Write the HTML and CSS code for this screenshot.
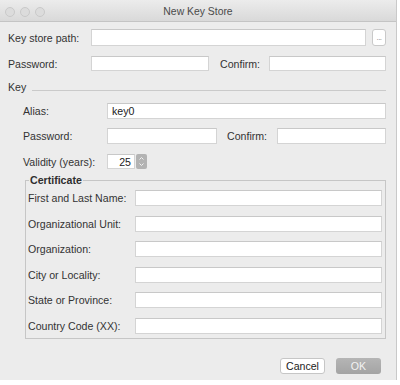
FILE: index.html
```html
<!DOCTYPE html>
<html lang="en">
<head>
    <meta charset="UTF-8">
    <title>New Key Store</title>
    <link rel="stylesheet" href="styles.css">
</head>

<body>
    <div class="window">
        <!-- title bar -->
        <div class="titlebar">
            <div class="lights"><span></span><span></span><span></span></div>
            <div class="title">New Key Store</div>
        </div>

        <div class="content">
            <!-- key store -->
            <div class="row row-path">
                <div class="lbl lbl-main">Key store path:</div>
                <div class="field grow"></div>
                <div class="dots">...</div>
            </div>
            <div class="row row-pass">
                <div class="lbl lbl-main">Password:</div>
                <div class="field store-pass"></div>
                <div class="lbl lbl-confirm">Confirm:</div>
                <div class="field grow"></div>
            </div>

            <!-- key -->
            <div class="section">
                <span>Key</span>
                <span class="rule"></span>
            </div>
            <div class="key">
                <div class="row row-key">
                    <div class="lbl lbl-key">Alias:</div>
                    <div class="field grow">key0</div>
                </div>
                <div class="row row-key">
                    <div class="lbl lbl-key">Password:</div>
                    <div class="field key-pass"></div>
                    <div class="lbl lbl-confirm2">Confirm:</div>
                    <div class="field grow"></div>
                </div>
                <div class="row row-valid">
                    <div class="lbl lbl-key">Validity (years):</div>
                    <div class="field years">25</div>
                    <div class="stepper">
                        <svg viewBox="0 0 11 15" width="11" height="15">
                            <rect x="0" y="0" width="11" height="15" rx="2" fill="#b3b3b3"/>
                            <path d="M3.5 5.5 L5.5 3.5 L7.5 5.5" fill="none" stroke="#f2f2f2" stroke-width="1"/>
                            <path d="M3.5 9.5 L5.5 11.5 L7.5 9.5" fill="none" stroke="#f2f2f2" stroke-width="1"/>
                        </svg>
                    </div>
                </div>

                <!-- certificate box -->
                <div class="group">
                    <div class="group-title">Certificate</div>
                    <div class="row row-cert">
                        <div class="lbl lbl-cert">First and Last Name:</div>
                        <div class="field grow"></div>
                    </div>
                    <div class="row row-cert">
                        <div class="lbl lbl-cert">Organizational Unit:</div>
                        <div class="field grow"></div>
                    </div>
                    <div class="row row-cert">
                        <div class="lbl lbl-cert">Organization:</div>
                        <div class="field grow"></div>
                    </div>
                    <div class="row row-cert">
                        <div class="lbl lbl-cert">City or Locality:</div>
                        <div class="field grow"></div>
                    </div>
                    <div class="row row-cert">
                        <div class="lbl lbl-cert">State or Province:</div>
                        <div class="field grow"></div>
                    </div>
                    <div class="row row-cert">
                        <div class="lbl lbl-cert">Country Code (XX):</div>
                        <div class="field grow"></div>
                    </div>
                </div>
            </div>

            <!-- buttons -->
            <div class="actions">
                <div class="btn btn-cancel">Cancel</div>
                <div class="btn btn-ok">OK</div>
            </div>
        </div>
    </div>
</body>
</html>
```

FILE: styles.css
```css
html,
body {
    margin: 0;
    padding: 0;
}

body {
    background: #ffffff;
    font-family: "Liberation Sans", Arial, sans-serif;
    font-size: 10.6px;
    color: #333;
}

/* window */
.window {
    width: 396px;
    height: 380px;
    background: #ececec;
    border-right: 1px solid #c9c9c9;
}

.titlebar {
    position: relative;
    height: 22px;
    box-sizing: border-box;
    background: linear-gradient(to bottom, #ececec, #d9d9d9);
    border-bottom: 1px solid #c4c4c4;
    display: flex;
    align-items: center;
    justify-content: center;
}

/* traffic lights (inactive) */
.lights {
    position: absolute;
    left: 5px;
    top: 7px;
    display: flex;
    gap: 5px;
}

.lights span {
    width: 10px;
    height: 10px;
    box-sizing: border-box;
    border-radius: 50%;
    background: #dcdcdc;
    border: 1px solid #c9c9c9;
}

.title {
    font-size: 10.4px;
    color: #4a4a4a;
    margin-top: 1px;
}

/* content */
.content {
    padding: 7px 10px 0 8px;
}

.row {
    display: flex;
    align-items: center;
}

.lbl {
    flex: none;
    white-space: nowrap;
}

.field {
    height: 100%;
    box-sizing: border-box;
    background: #fff;
    border: 1px solid #d4d4d4;
    border-top-color: #c8c8c8;
    padding: 0 4px;
    display: flex;
    align-items: center;
    color: #222;
}

.grow {
    flex: 1;
}

.row-path {
    height: 17px;
}

.lbl-main {
    width: 83px;
}

.dots {
    flex: none;
    width: 14px;
    height: 17px;
    margin-left: 6px;
    box-sizing: border-box;
    background: #fff;
    border: 1px solid #c9c9c9;
    border-radius: 3px;
    font-size: 8px;
    color: #888;
    text-align: center;
    line-height: 15px;
    letter-spacing: -0.5px;
}

.row-pass {
    height: 15px;
    margin-top: 10px;
}

.store-pass {
    width: 118px;
    flex: none;
}

.lbl-confirm {
    width: 60px;
    padding-left: 11px;
    box-sizing: border-box;
}

/* key section */
.section {
    height: 14px;
    margin-top: 9px;
    display: flex;
    align-items: center;
}

.rule {
    flex: 1;
    height: 1px;
    background: #cacaca;
    margin: 6px 0 0 6px;
}

.key {
    padding-left: 15px;
}

.row-key {
    height: 16px;
    margin-top: 9px;
}

.lbl-key {
    width: 84px;
}

.key-pass {
    width: 110px;
    flex: none;
}

.lbl-confirm2 {
    width: 60px;
    padding-left: 10px;
    box-sizing: border-box;
}

.row-valid {
    height: 15px;
    margin-top: 10px;
}

.years {
    width: 28px;
    flex: none;
    justify-content: flex-end;
    padding-right: 3px;
}

.stepper {
    margin-left: 1px;
    height: 15px;
}

.stepper svg {
    display: block;
}

/* certificate group */
.group {
    margin: 11px 0 0 2px;
    border: 1px solid #c6c6c6;
    padding: 0 3px 4px 2px;
}

/* title sits on the top border */
.group-title {
    width: fit-content;
    height: 12px;
    margin: -7px 0 0 1px;
    padding: 0 1px;
    line-height: 12px;
    font-weight: bold;
    color: #2e2e2e;
    background: #ececec;
}

.row-cert {
    height: 16px;
    margin-top: 9.6px;
}

.group-title + .row-cert {
    margin-top: 4px;
}

.lbl-cert {
    width: 107px;
}

/* buttons */
.actions {
    display: flex;
    justify-content: flex-end;
    gap: 11px;
    margin-top: 19px;
    padding-right: 5px;
}

.btn {
    width: 45px;
    height: 16px;
    box-sizing: border-box;
    border-radius: 3px;
    display: flex;
    align-items: center;
    justify-content: center;
}

.btn-cancel {
    background: #fff;
    border: 1px solid #c6c6c6;
    color: #222;
}

.btn-ok {
    background: linear-gradient(to bottom, #b5b5b5, #a4a4a4);
    color: #f3f3f3;
}
```
